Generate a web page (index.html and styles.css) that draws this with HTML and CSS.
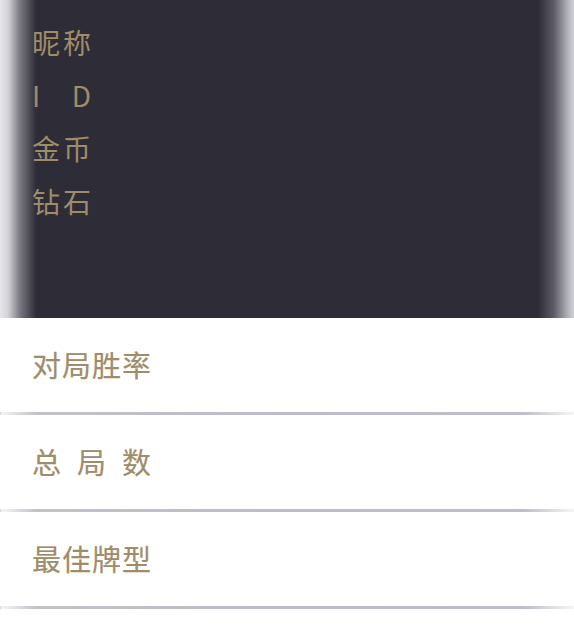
FILE: index.html
```html
<!DOCTYPE html>
<html lang="zh">
<head>
<meta charset="utf-8">
<link rel="stylesheet" href="styles.css">
</head>
<body>
<div class="page">
  <section class="profile">
    <div class="label">昵称</div>
    <div class="label">I D</div>
    <div class="label">金币</div>
    <div class="label">钻石</div>
  </section>
  <section class="stats">
    <div class="row"><span class="name">对局胜率</span></div>
    <div class="row"><span class="name">总局数</span></div>
    <div class="row"><span class="name">最佳牌型</span></div>
  </section>
</div>
</body>
</html>
```
FILE: styles.css
```css
html, body {
  margin: 0;
  padding: 0;
  background: #ffffff;
}
body {
  font-family: "Noto Sans CJK SC", "Noto Sans", sans-serif;
  color: #9f8c69;
}
.page {
  width: 574px;
}
.profile {
  height: 318px;
  box-sizing: border-box;
  padding: 16px 0 0 32px;
  background:
    linear-gradient(90deg, #e6e6ea 0px, #d2d2d8 8px, #7a7982 20px, #2e2c37 36px, #2e2c37 calc(100% - 36px), #5e5d67 calc(100% - 20px), #b4b4bc calc(100% - 6px), #d0d0d6 100%);
}
.label {
  width: 59px;
  font-size: 28px;
  line-height: 53px;
  height: 53px;
  text-align: justify;
  text-align-last: justify;
}
.stats {
  display: flex;
  flex-direction: column;
}
.row {
  height: 97px;
  box-sizing: border-box;
  padding: 0 0 5px 32px;
  display: flex;
  align-items: center;
  position: relative;
}
.row::after {
  content: "";
  position: absolute;
  left: 0;
  right: 0;
  bottom: 0;
  height: 3px;
  background: linear-gradient(90deg, #d0d0d6 0px, #f4f4f6 2px, #c2c1ca 36px, #bdbcc6 50%, #bfbec8 calc(100% - 50px), #f6f6f8 100%);
}
.name {
  width: 119px;
  font-size: 29px;
  line-height: 40px;
  text-align: justify;
  text-align-last: justify;
  -webkit-text-stroke: 0.2px #9f8c69;
}
```
